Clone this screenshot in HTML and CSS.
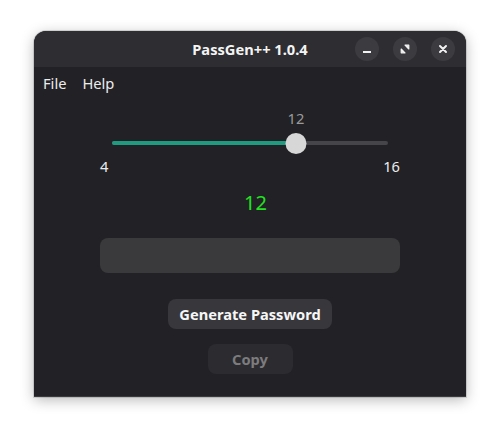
FILE: index.html
```html
<!DOCTYPE html>
<html>
<head>
<meta charset="utf-8">
<link rel="stylesheet" href="styles.css">
</head>
<body>
<div class="desktop">
  <div class="window">
    <div class="header">
      <div class="title">PassGen++ 1.0.4</div>
      <div class="controls">
        <div class="ctl">
          <svg width="16" height="16" viewBox="0 0 16 16"><rect x="4" y="10" width="8" height="2" fill="#f2f2f2"/></svg>
        </div>
        <div class="ctl">
          <svg width="16" height="16" viewBox="0 0 16 16"><path d="M8 4.2H11.8V8Z M8 11.8H4.2V8Z" fill="#f2f2f2" stroke="#f2f2f2" stroke-width="1.2" stroke-linejoin="round"/></svg>
        </div>
        <div class="ctl">
          <svg width="16" height="16" viewBox="0 0 16 16"><path d="M5 5L11 11M11 5L5 11" stroke="#f2f2f2" stroke-width="2" stroke-linecap="round"/></svg>
        </div>
      </div>
    </div>
    <div class="menubar">
      <span class="menu-item">File</span>
      <span class="menu-item">Help</span>
    </div>
    <div class="main">
      <div class="slider">
        <div class="value-row"><span class="value-label" style="left: 196px">12</span></div>
        <div class="track-row">
          <div class="track"><div class="fill" style="width: 66.667%"></div></div>
          <div class="knob" style="left: 66.667%"></div>
        </div>
        <div class="marks"><span>4</span><span>16</span></div>
      </div>
      <div class="length">12</div>
      <div class="entry"></div>
      <button class="btn generate">Generate Password</button>
      <button class="btn copy">Copy</button>
    </div>
  </div>
</div>
</body>
</html>
```

FILE: styles.css
```css
html, body {
  margin: 0;
  padding: 0;
  background: #ffffff;
}
body {
  font-family: "Noto Sans", "DejaVu Sans", sans-serif;
  width: 500px;
  height: 435px;
  overflow: hidden;
}
.desktop {
  padding: 31px 34px 0;
}
.window {
  width: 432px;
  height: 366px;
  box-sizing: border-box;
  background: #222226;
  border-radius: 12px 12px 0 0;
  border-bottom: 1px solid #3a3a3e;
  box-shadow: 0 3px 14px rgba(0,0,0,0.28), 0 0 0 1px rgba(0,0,0,0.12);
  display: flex;
  flex-direction: column;
  overflow: hidden;
}
.header {
  height: 36px;
  background: #2e2e32;
  position: relative;
  display: flex;
  align-items: center;
  justify-content: center;
  flex-shrink: 0;
}
.title {
  color: #f4f4f4;
  font-weight: 700;
  font-size: 14.667px;
}
.controls {
  position: absolute;
  right: 11px;
  top: 6px;
  display: flex;
  gap: 14px;
}
.ctl {
  width: 24px;
  height: 24px;
  border-radius: 50%;
  background: #3c3c40;
  display: flex;
  align-items: center;
  justify-content: center;
}
.ctl svg { display: block; }
.menubar {
  height: 33px;
  box-sizing: border-box;
  padding-bottom: 2px;
  display: flex;
  align-items: center;
  gap: 16px;
  padding-left: 9px;
  color: #ececec;
  font-size: 14.667px;
  flex-shrink: 0;
}
.main {
  display: flex;
  flex-direction: column;
  align-items: center;
  padding-top: 8px;
}
.slider {
  width: 300px;
}
.value-row {
  height: 20px;
  position: relative;
}
.value-label {
  position: absolute;
  top: 0;
  line-height: 20px;
  transform: translateX(-50%);
  color: #9a9a9c;
  font-size: 14.667px;
}
.track-row {
  margin: 3px 12px 0;
  height: 24px;
  position: relative;
  display: flex;
  align-items: center;
}
.track {
  width: 100%;
  height: 4px;
  border-radius: 2px;
  background: #45454a;
  overflow: hidden;
}
.fill {
  height: 100%;
  background: #1f9c80;
}
.knob {
  position: absolute;
  top: 1.5px;
  width: 21px;
  height: 21px;
  border-radius: 50%;
  background: #d7d7d7;
  transform: translateX(-50%);
}
.marks {
  margin-top: 1px;
  display: flex;
  justify-content: space-between;
  line-height: 20px;
  font-size: 14.667px;
  color: #ececec;
}
.length {
  margin-top: 13px;
  margin-left: 11px;
  font-size: 20px;
  line-height: 27px;
  color: #22e222;
}
.entry {
  margin-top: 22px;
  width: 300px;
  height: 35px;
  border-radius: 8px;
  background: #3a3a3d;
}
.btn {
  font-family: "Noto Sans", "DejaVu Sans", sans-serif;
  font-weight: 700;
  font-size: 14.667px;
  border: none;
  border-radius: 8px;
  height: 30px;
  padding: 0 11px;
  margin: 0;
}
.generate {
  margin-top: 26px;
  background: #38383c;
  color: #f6f6f6;
}
.copy {
  margin-top: 15px;
  width: 85px;
  background: #2c2c30;
  color: #7c7c7e;
}
```
